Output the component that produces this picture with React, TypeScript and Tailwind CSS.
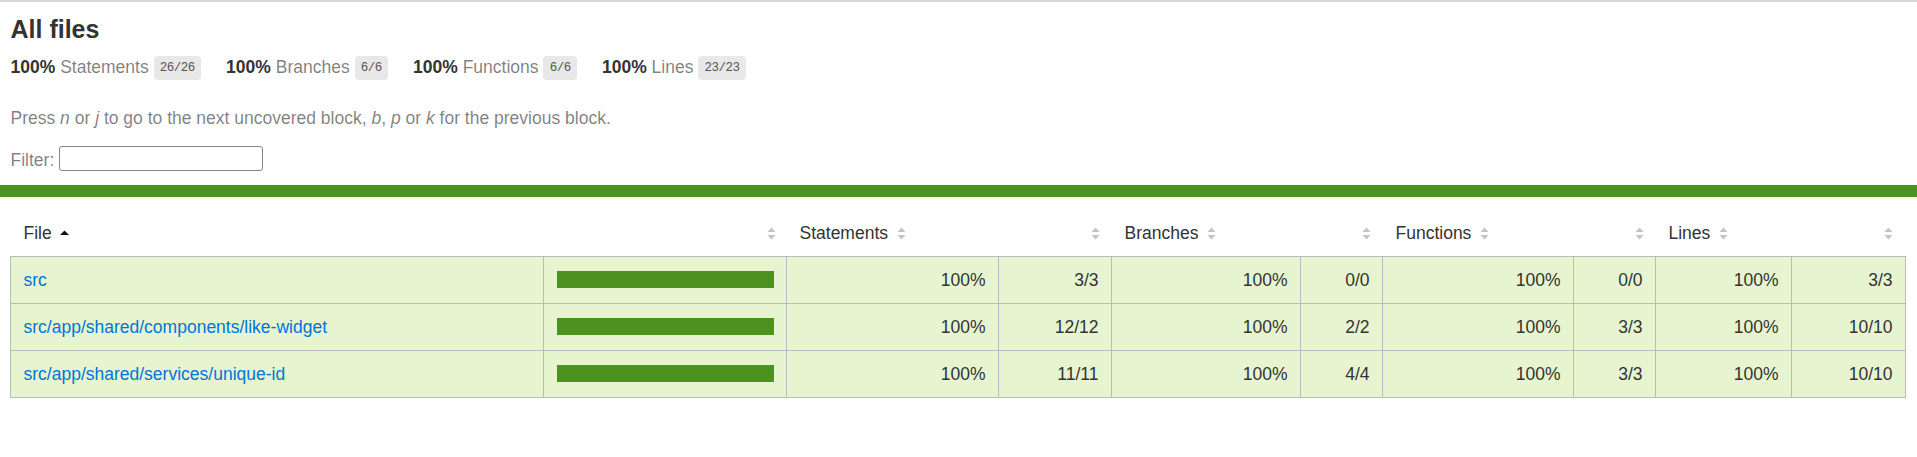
import React from "react";

const COLS =
  "grid grid-cols-[533px_243px_212px_113px_189px_82px_191px_82px_136px_113px]";

function Sorter() {
  return (
    <svg width="9" height="13" viewBox="0 0 9 13" className="block shrink-0 mt-[3.5px]">
      <polygon points="0.5,5 4.5,0.5 8.5,5" fill="#c4c4c4" />
      <polygon points="0.5,8 8.5,8 4.5,12.5" fill="#c4c4c4" />
    </svg>
  );
}

function SortedAsc() {
  return (
    <svg width="9" height="13" viewBox="0 0 9 13" className="block shrink-0 mt-[3.5px]">
      <polygon points="0,8 4.5,3.5 9,8" fill="#111" />
    </svg>
  );
}

type Row = {
  file: string;
  s: [string, string];
  b: [string, string];
  f: [string, string];
  l: [string, string];
};

const rows: Row[] = [
  { file: "src", s: ["100%", "3/3"], b: ["100%", "0/0"], f: ["100%", "0/0"], l: ["100%", "3/3"] },
  {
    file: "src/app/shared/components/like-widget",
    s: ["100%", "12/12"],
    b: ["100%", "2/2"],
    f: ["100%", "3/3"],
    l: ["100%", "10/10"],
  },
  {
    file: "src/app/shared/services/unique-id",
    s: ["100%", "11/11"],
    b: ["100%", "4/4"],
    f: ["100%", "3/3"],
    l: ["100%", "10/10"],
  },
];

function Summary({ label, frac }: { label: string; frac: string }) {
  return (
    <div className="pr-[25px] whitespace-nowrap">
      <span className="font-bold text-[#333]">100%</span>{" "}
      <span className="text-black/50">{label}</span>{" "}
      <span className="font-['Liberation_Mono',monospace] text-[12.5px] tracking-[-0.5px] text-[#555] bg-[#e8e8e8] px-[6.25px] py-[5px] rounded-[3.75px] align-middle leading-[14px]">
        {frac}
      </span>
    </div>
  );
}

function HeadPct({ label }: { label: string }) {
  return (
    <>
      <div className="h-[20px] px-[12.5px] flex items-start whitespace-nowrap">
        <span className="leading-[20px]">{label}</span>
        <span className="ml-[9px]">
          <Sorter />
        </span>
      </div>
      <div className="h-[20px] px-[12.5px] flex items-start justify-end">
        <Sorter />
      </div>
    </>
  );
}

function Num({ v, last }: { v: string; last?: boolean }) {
  return (
    <div
      className={
        "py-[13px] px-[12.5px] text-right leading-[20px] text-[#333] " +
        (last ? "" : "border-r border-[#bbb]")
      }
    >
      {v}
    </div>
  );
}

export default function App() {
  return (
    <div className="min-h-[457px] bg-white border-t-2 border-[#d6d6d6] font-['Liberation_Sans',Arial,sans-serif] text-[17.5px] text-[#333] leading-[20px]">
      <div className="px-[10.5px] pt-[12.5px] pb-[14px]">
        <h1 className="text-[25px] font-bold leading-[29px] text-[#333]">All files</h1>
        <div className="flex pt-[13.5px]">
          <Summary label="Statements" frac="26/26" />
          <Summary label="Branches" frac="6/6" />
          <Summary label="Functions" frac="6/6" />
          <Summary label="Lines" frac="23/23" />
        </div>
        <p className="mt-[31px] text-black/50">
          Press <em>n</em> or <em>j</em> to go to the next uncovered block, <em>b</em>, <em>p</em> or{" "}
          <em>k</em> for the previous block.
        </p>
        <div className="flex items-start gap-[5px] mt-[18px] text-black/50">
          <span className="mt-[3.5px]">Filter:</span>
          <input
            type="search"
            className="w-[204px] h-[25px] border border-[#858585] rounded-[3px] bg-white outline-none px-1 text-[#333]"
          />
        </div>
      </div>
      <div className="h-[12px] bg-[#4d9221]" />
      <div className="pt-[13px] pl-[10px]">
        <div className={COLS + " pl-[1px] pt-[13px] pb-[13px] leading-[20px] text-[#333]"}>
          <div className="h-[20px] px-[12.5px] flex items-start whitespace-nowrap">
            <span className="leading-[20px]">File</span>
            <span className="ml-[8.5px]">
              <SortedAsc />
            </span>
          </div>
          <div className="h-[20px] px-[11px] flex items-start justify-end">
            <Sorter />
          </div>
          <HeadPct label="Statements" />
          <HeadPct label="Branches" />
          <HeadPct label="Functions" />
          <HeadPct label="Lines" />
        </div>
        <div className="w-[1896px] border border-[#bbb] bg-[#e6f5d0]">
          {rows.map((r, i) => (
            <div
              key={r.file}
              className={COLS + (i < rows.length - 1 ? " border-b border-[#bbb]" : "")}
            >
              <div className="py-[13px] px-[12.5px] leading-[20px] whitespace-nowrap border-r border-[#bbb]">
                <a href="#" className="text-[#0074d9] no-underline">
                  {r.file}
                </a>
              </div>
              <div className="border-r border-[#bbb] pt-[14px] pl-[13px]">
                <div className="w-[217px] h-[17px] bg-[#4d9221]" />
              </div>
              <Num v={r.s[0]} />
              <Num v={r.s[1]} />
              <Num v={r.b[0]} />
              <Num v={r.b[1]} />
              <Num v={r.f[0]} />
              <Num v={r.f[1]} />
              <Num v={r.l[0]} />
              <Num v={r.l[1]} last />
            </div>
          ))}
        </div>
      </div>
    </div>
  );
}
